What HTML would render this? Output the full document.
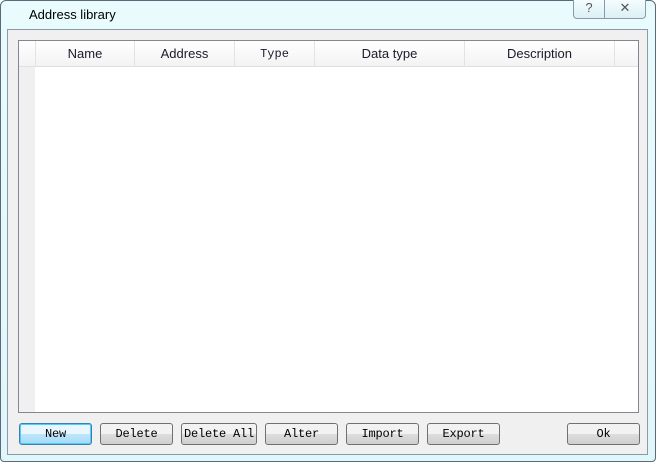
<!DOCTYPE html><html><head><style>
*{margin:0;padding:0;box-sizing:border-box}
body{width:656px;height:462px;background:#fff;position:relative;overflow:hidden;font-family:"Liberation Sans",sans-serif}
.win{position:absolute;left:0;top:0;width:656px;height:462px;border:1px solid #5a6a78;border-radius:6px 6px 4px 4px;background:linear-gradient(#e9fbfd,#dff6fa)}
.title{position:absolute;left:29px;top:7px;font-size:13px;color:#000}
.client{position:absolute;left:7px;top:29px;width:641px;height:426px;background:#f0f0f0;border:1px solid #8a9aa8}
.cb{position:absolute;top:0;height:19px;border:1px solid #8a9aa8;border-top:none;background:linear-gradient(#f4fdfe,#dcf0f5);font-size:13px;text-align:center;color:#555}
.list{position:absolute;left:18px;top:40px;width:621px;height:373px;border:1px solid #828790;background:#fff}
.rh{position:absolute;left:0;top:0;width:16px;height:371px;background:#f0f0f0}
.hdr{position:absolute;left:0;top:0;height:26px;width:619px;background:linear-gradient(#fff,#f3f3f3);border-bottom:1px solid #e0e0e0}
.h{position:absolute;top:0;height:26px;line-height:26px;text-align:center;font-size:13px;color:#1a1a2a;border-left:1px solid #e3e3e3}
.btn{position:absolute;top:423px;height:22px;width:73px;border:1px solid #707070;border-radius:3px;background:linear-gradient(#f2f2f2 50%,#dddddd 50%,#cfcfcf);font-family:"Liberation Mono",monospace;font-size:12px;line-height:20px;text-align:center;color:#000;letter-spacing:-0.2px}
.btn.def{border:1px solid #3c7fb1;background:linear-gradient(#eaf6fd 50%,#bee6fd 50%,#a7d9f5);box-shadow:inset 0 0 0 1px #48d0f8}
</style></head><body>
<div class="win"></div>
<div class="title">Address library</div>
<div class="cb" style="left:573px;width:32px;border-radius:0 0 0 4px">?</div>
<div class="cb" style="left:604px;width:42px;border-radius:0 0 4px 0">✕</div>
<div class="client"></div>
<div class="list">
<div class="rh"></div>
<div class="hdr">
<div class="h" style="left:16px;width:99px">Name</div>
<div class="h" style="left:115px;width:100px">Address</div>
<div class="h" style="left:215px;width:80px;font-family:'Liberation Mono',monospace;font-size:12px">Type</div>
<div class="h" style="left:295px;width:150px">Data type</div>
<div class="h" style="left:445px;width:150px">Description</div>
<div class="h" style="left:595px;width:24px"></div>
</div>
</div>
<div class="btn def" style="left:19px">New</div>
<div class="btn" style="left:100px">Delete</div>
<div class="btn" style="left:181px;width:76px">Delete All</div>
<div class="btn" style="left:265px">Alter</div>
<div class="btn" style="left:346px">Import</div>
<div class="btn" style="left:427px">Export</div>
<div class="btn" style="left:567px">Ok</div>
</body></html>
